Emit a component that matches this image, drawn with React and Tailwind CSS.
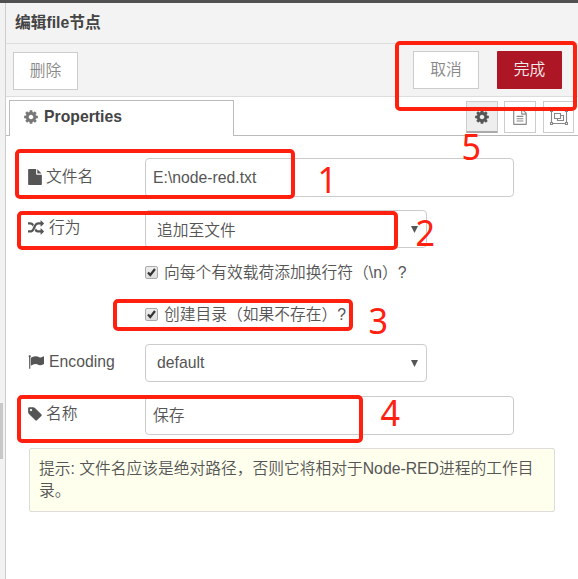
const ICONS = {
  cog: "M1152 896q0-106-75-181t-181-75-181 75-75 181 75 181 181 75 181-75 75-181zm512-109v222q0 12-8 23t-20 13l-185 28q-19 54-39 91 35 50 107 138 10 12 10 25t-9 23q-27 37-99 108t-94 71q-12 0-26-9l-138-108q-44 23-91 38-16 136-29 186-7 28-36 28h-222q-14 0-24.5-8.5t-11.5-21.5l-28-184q-49-16-90-37l-141 107q-10 9-25 9-14 0-25-11-126-114-165-168-7-10-7-23 0-12 8-23 15-21 51-66.5t54-70.5q-27-50-41-99l-183-27q-13-2-21-12.5t-8-23.5v-222q0-12 8-23t19-13l186-28q14-46 39-92-40-57-107-138-10-12-10-24 0-10 9-23 26-36 98.5-107.5t94.5-71.5q13 0 26 10l138 107q44-23 91-38 16-136 29-186 7-28 36-28h222q14 0 24.5 8.5t11.5 21.5l28 184q49 16 90 37l142-107q9-9 24-9 13 0 25 10 129 119 165 170 7 8 7 22 0 12-8 23-15 21-51 66.5t-54 70.5q26 50 41 98l183 28q13 2 21 12.5t8 23.5z",
  file: "M1152 512v-472q22 14 36 28l408 408q14 14 28 36h-472zm-128 32q0 40 28 68t68 28h544v1056q0 40-28 68t-68 28h-1344q-40 0-68-28t-28-68v-1600q0-40 28-68t68-28h800v544z",
  tag: "M576 448q0-53-37.5-90.5t-90.5-37.5-90.5 37.5-37.5 90.5 37.5 90.5 90.5 37.5 90.5-37.5 37.5-90.5zm1067 576q0 53-37 90l-491 492q-39 37-91 37-53 0-90-37l-715-716q-38-37-64.5-101t-26.5-117v-416q0-52 38-90t90-38h416q53 0 117 26.5t102 64.5l715 714q37 39 37 91z",
  random: "M666 481q-60 92-137 273-22-45-37-72.5t-40.5-63.5-51-56.5-63-35-81.5-14.5h-224q-14 0-23-9t-9-23v-192q0-14 9-23t23-9h224q250 0 410 225zm1126 799q0 14-9 23l-320 320q-9 9-23 9-13 0-22.5-9.5t-9.5-22.5v-192q-32 0-85 .5t-81 1-73-1-71-5-64-10.5-63-18.5-58-28.5-59-40-55-53.5-56-69.5q59-93 136-273 22 45 37 72.5t40.5 63.5 51 56.5 63 35 81.5 14.5h256v-192q0-14 9-23t23-9q12 0 24 10l319 319q9 9 9 23zm0-896q0 14-9 23l-320 320q-9 9-23 9-13 0-22.5-9.5t-9.5-22.5v-192h-256q-48 0-87 15t-69 45-51 61.5-45 77.5q-32 62-78 171-29 66-49.5 111t-54 105-64 100-74 83-90 68.5-106.5 42-128 16.5h-224q-14 0-23-9t-9-23v-192q0-14 9-23t23-9h224q48 0 87-15t69-45 51-61.5 45-77.5q32-62 78-171 29-66 49.5-111t54-105 64-100 74-83 90-68.5 106.5-42 128-16.5h256v-192q0-14 9-23t23-9q12 0 24 10l319 319q9 9 9 23z",
  flag: "M320 256q0 72-64 110v1266q0 13-9.5 22.5t-22.5 9.5h-64q-13 0-22.5-9.5t-9.5-22.5v-1266q-64-38-64-110 0-53 37.5-90.5t90.5-37.5 90.5 37.5 37.5 90.5zm1472 64v763q0 25-12.5 38.5t-39.5 27.5q-215 116-369 116-61 0-123.5-22t-108.5-48-115.5-48-142.5-22q-192 0-464 146-17 9-33 9-26 0-45-19t-19-45v-742q0-32 31-55 21-14 79-43 236-120 421-120 107 0 200 29t219 88q38 19 88 19 54 0 117.5-21t110-47 88-47 54.5-21q26 0 45 19t19 45z",
  fileText: "M1596 380q28 28 48 76t20 88v1152q0 40-28 68t-68 28h-1344q-40 0-68-28t-28-68v-1600q0-40 28-68t68-28h896q40 0 88 20t76 48zm-444-244v376h376q-10-29-22-41l-313-313q-12-12-41-22zm384 1528v-1024h-416q-40 0-68-28t-28-68v-416h-768v1536h1280zm-1024-864q0-14 9-23t23-9h704q14 0 23 9t9 23v64q0 14-9 23t-23 9h-704q-14 0-23-9t-9-23v-64zm736 224q14 0 23 9t9 23v64q0 14-9 23t-23 9h-704q-14 0-23-9t-9-23v-64q0-14 9-23t23-9h704zm0 256q14 0 23 9t9 23v64q0 14-9 23t-23 9h-704q-14 0-23-9t-9-23v-64q0-14 9-23t23-9h704z",
};

function Icon({ name, className = "" }) {
  return (
    <svg viewBox="0 0 1792 1792" className={`size-4 shrink-0 fill-current ${className}`}>
      <path d={ICONS[name]} />
    </svg>
  );
}

function GroupIcon() {
  return (
    <svg viewBox="0 0 18 16" className="h-4 w-[18px] shrink-0" fill="none" stroke="currentColor" strokeWidth="1.100">
      <path d="M3 1.500h12M3 14.500h12M1.500 3v10M16.500 3v10" />
      <path d="M.5.5h2v2h-2zM15.500.5h2v2h-2zM.5 13.500h2v2h-2zM15.500 13.500h2v2h-2z" />
      <path d="M4.500 4.500h6v5h-6zM10.500 6.500h3v5h-6v-2" />
    </svg>
  );
}

function Label({ icon, children, className = "" }) {
  return (
    <div className={`flex w-[117px] shrink-0 items-center ${className}`}>
      <Icon name={icon} className={icon === "file" || icon === "tag" ? "mr-[3px] -ml-px" : "mr-[5px]"} />
      <span>{children}</span>
    </div>
  );
}

function Select({ children, className = "pt-0.5" }) {
  return (
    <div className="flex h-[38px] w-[282px] items-center justify-between rounded-[4px] border border-[#ccc] bg-white pr-[8px] pl-[11px]">
      <span className={className}>{children}</span>
      <svg viewBox="0 0 7 7" className="size-[7px] fill-[#555]">
        <path d="M0 0h7L3.500 7z" />
      </svg>
    </div>
  );
}

function Field({ children }) {
  return (
    <div className="flex h-[39px] w-[369px] items-center rounded-[4px] border border-[#ccc] bg-white pt-px pl-[7px]">
      {children}
    </div>
  );
}

function Check({ children }) {
  return (
    <div className="flex h-6 items-center pl-[117px]">
      <span className="mr-1.5 flex size-[13px] items-center justify-center rounded-[2px] border border-[#aaa] bg-linear-to-b from-[#eee] to-[#ddd]">
        <svg viewBox="0 0 9 9" className="size-[9px]" fill="none" stroke="#333" strokeWidth="2.200">
          <path d="M1 4.500l2.300 2.500L8 1" />
        </svg>
      </span>
      <span className="whitespace-nowrap pt-0.5">{children}</span>
    </div>
  );
}

const RED_BOXES = [
  "left-[15px] top-[149px] w-[280px] h-[50px]",
  "left-[17px] top-[211px] w-[381px] h-[39px]",
  "left-[113px] top-[299px] w-[240px] h-[32px]",
  "left-[17px] top-[395px] w-[346px] h-[48px]",
  "left-[395px] top-[41px] w-[182px] h-[70px]",
];

const DIGITS = [
  ["1", "left-[317px] top-[161px]"],
  ["2", "left-[415px] top-[214px]"],
  ["3", "left-[368px] top-[302px]"],
  ["4", "left-[380px] top-[394px]"],
  ["5", "left-[461px] top-[128px]"],
];

export default function App() {
  return (
    <div className="relative flex h-[579px] w-[578px] flex-col overflow-hidden bg-white font-['Liberation_Sans','Noto_Sans_CJK_SC',sans-serif] text-[15.75px] font-[350] leading-[22px] text-[#555]">
      <div className="h-[3px] shrink-0 bg-[#505050]" />
      <div className="flex min-h-0 flex-1">
        <div className="w-[6px] shrink-0 border-r border-[#ccc] bg-[#f2f2f2] pt-[400px]">
          <div className="h-[56px] w-[3px] bg-[#c8c8c8]" />
        </div>
        <div className="flex min-w-0 flex-1 flex-col">
          <div className="flex h-[41px] shrink-0 items-center border-b border-[#ddd] bg-[#f3f3f3] pl-[9px] font-bold text-[#444]">
            编辑file节点
          </div>
          <div className="flex h-[53px] shrink-0 items-start border-b border-[#ddd] bg-[#f3f3f3] pr-4 pl-[7px] text-[#888]">
            <div className="mt-2 flex h-[38px] w-[65px] items-center justify-center border border-[#ccc] bg-white">删除</div>
            <div className="mt-[7px] ml-auto flex h-[38px] w-[66px] items-center justify-center border border-[#ccc] bg-white">取消</div>
            <div className="mt-[7px] ml-[18px] flex h-[38px] w-[65px] items-center justify-center rounded-[1px] bg-[#ad1625] text-[#eee]">完成</div>
          </div>
          <div className="flex h-[39px] shrink-0">
            <div className="w-[3px] border-b border-[#bbb]" />
            <div className="mt-[3px] flex w-[225px] items-center border-x border-t border-[#bbb] pb-1 pl-[13px] font-bold text-[#444]">
              <Icon name="cog" className="mr-[5px] text-[#777]" />
              Properties
            </div>
            <div className="flex flex-1 items-start justify-end border-b border-[#bbb] pt-1 pr-[4px] text-[#888]">
              <div className="mr-1.5 flex h-8 w-8 items-center justify-center border border-b-2 border-[#ccc] border-b-[#aaa] bg-[#eee] text-[#555]">
                <Icon name="cog" />
              </div>
              <div className="mr-[7px] flex h-8 w-8 items-center justify-center border border-[#ccc]">
                <Icon name="fileText" />
              </div>
              <div className="flex h-8 w-[31px] items-center justify-center border border-[#ccc]">
                <GroupIcon />
              </div>
            </div>
          </div>
          <div className="flex flex-col pt-[22px] pl-[22px]">
            <div className="flex">
              <Label icon="file" className="h-[37px]">文件名</Label>
              <Field>E:\node-red.txt</Field>
            </div>
            <div className="mt-[13px] flex">
              <Label icon="random" className="h-[35px]">行为</Label>
              <Select className="pt-1">追加至文件</Select>
            </div>
            <div className="mt-[12px]">
              <Check>向每个有效载荷添加换行符（\n）?</Check>
            </div>
            <div className="mt-[18px]">
              <Check>创建目录（如果不存在）?</Check>
            </div>
            <div className="mt-[18px] flex">
              <Label icon="flag" className="h-[35px]">Encoding</Label>
              <Select className="pt-0">default</Select>
            </div>
            <div className="mt-[14px] flex">
              <Label icon="tag" className="h-[35px]">名称</Label>
              <Field>保存</Field>
            </div>
            <div className="mt-[13px] ml-px h-[64px] w-[526px] rounded-[2px] border border-[#ddd] bg-[#ffffee] px-[9px] pt-[9px]">
              提示: 文件名应该是绝对路径，否则它将相对于Node-RED进程的工作目录。
            </div>
          </div>
        </div>
      </div>
      {RED_BOXES.map((pos) => (
        <div key={pos} className={`absolute rounded-[5px] border-4 border-[#ff2010] ${pos}`} />
      ))}
      {DIGITS.map(([n, pos]) => (
        <div key={n} className={`absolute scale-x-95 font-['Noto_Sans',sans-serif] text-[36px] leading-[38px] font-normal text-[#ff2010] ${pos}`}>
          {n}
        </div>
      ))}
    </div>
  );
}
